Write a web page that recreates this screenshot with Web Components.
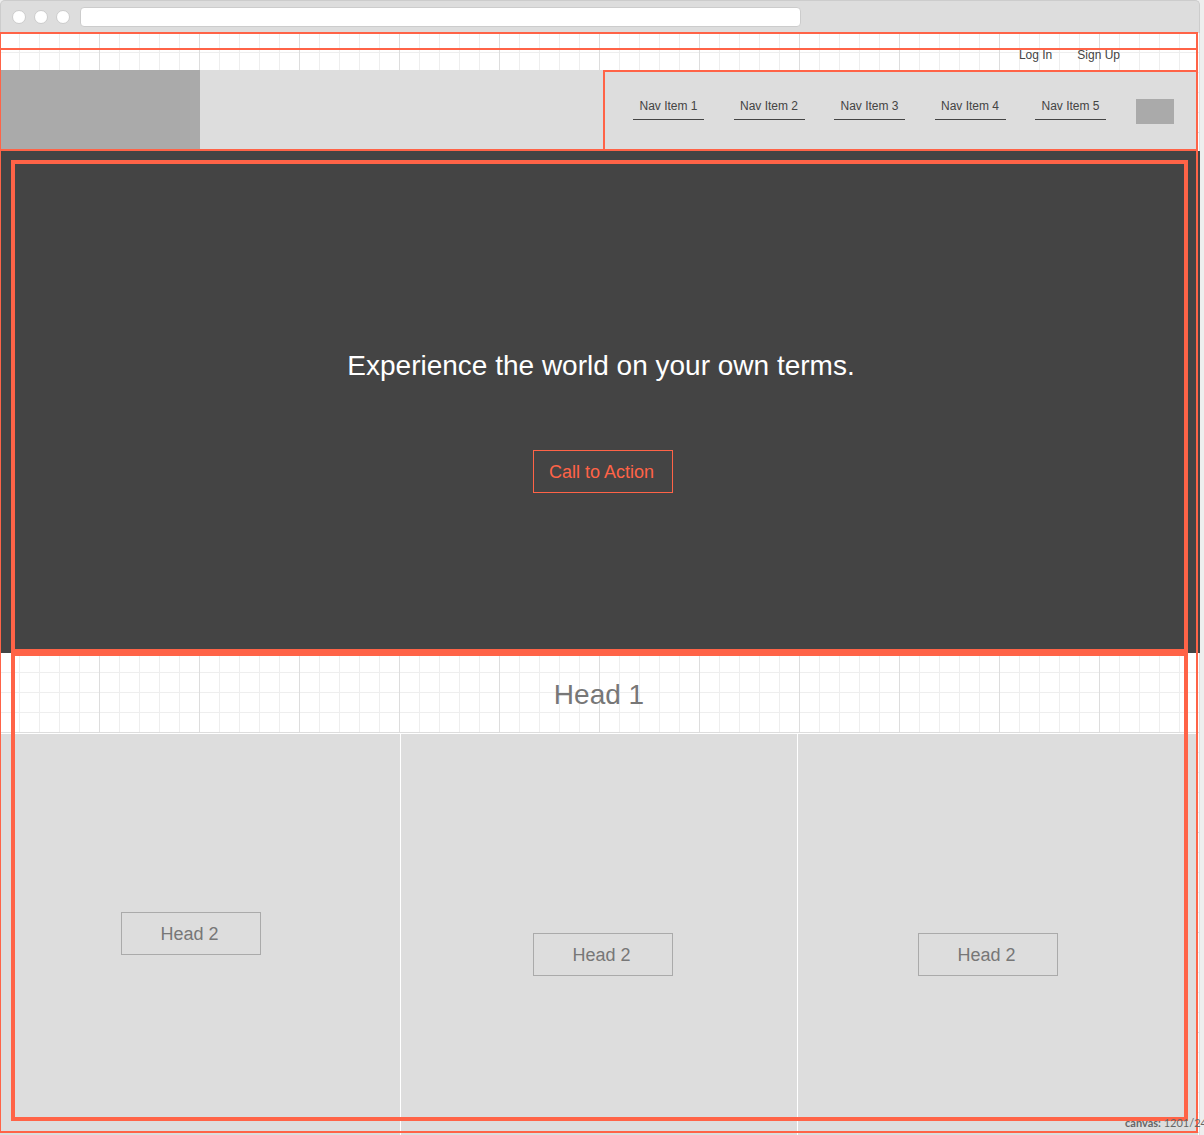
<!DOCTYPE html>
<html lang="en">
<head>
<meta charset="utf-8">
<title>Homepage wireframe</title>
<style>
  html { background: #eee; }
  body { margin: 0; overflow-x: hidden; font-family: "Liberation Sans", Arial, sans-serif; color: #444; }
</style>
</head>
<body>
<wire-page>
  <browser-chrome slot="chrome"></browser-chrome>
  <site-header>
    <a slot="account" href="#login">Log In</a>
    <a slot="account" href="#signup">Sign Up</a>
    <nav-item>Nav Item 1</nav-item>
    <nav-item>Nav Item 2</nav-item>
    <nav-item>Nav Item 3</nav-item>
    <nav-item>Nav Item 4</nav-item>
    <nav-item>Nav Item 5</nav-item>
  </site-header>
  <hero-banner>
    Experience the world on your own terms.
    <box-button slot="action" accent>Call to Action</box-button>
  </hero-banner>
  <feature-section>
    <span slot="title">Head 1</span>
    <feature-cell class="first"><box-button>Head 2</box-button></feature-cell>
    <feature-cell class="middle"><box-button>Head 2</box-button></feature-cell>
    <feature-cell class="last"><box-button>Head 2</box-button></feature-cell>
  </feature-section>
</wire-page>
<canvas-size label="canvas:">1201/24</canvas-size>

<script>
const define = (name, markup) => {
  customElements.define(name, class extends HTMLElement {
    constructor() {
      super();
      this.attachShadow({ mode: "open" }).innerHTML =
        "<style>*{box-sizing:border-box}:host{box-sizing:border-box}</style>" + markup;
    }
    connectedCallback() {
      const label = this.shadowRoot.querySelector("[data-label]");
      if (label) label.textContent = this.getAttribute("label");
    }
  });
};

define("wire-page", `
  <style>
    :host { --guide: #ff6347; display: flex; flex-direction: column; position: relative;
            min-height: 100vh; margin-right: 4px; }
    main { flex: 1; display: flex; flex-direction: column; background-color: #fff;
      background-image:
        linear-gradient(to left, #ddd 1px, transparent 1px),
        linear-gradient(to top, #ddd 1px, transparent 1px),
        linear-gradient(to left, #eee 1px, transparent 1px),
        linear-gradient(to top, #eee 1px, transparent 1px);
      background-size: 100px 100px, 100px 100px, 20px 20px, 20px 20px; }
    .guide { position: absolute; inset: 32px 2px 2px 0; border: 2px solid var(--guide);
             border-left-width: 1px; pointer-events: none; }
  </style>
  <slot name="chrome"></slot>
  <main><slot></slot></main>
  <div class="guide"></div>`);

define("browser-chrome", `
  <style>
    :host { display: flex; align-items: center; gap: 8px; height: 33px; padding: 0 11px;
            background: #ddd; border: 1px solid #ccc; border-bottom: 0; border-radius: 5px 5px 0 0; }
    i { flex: none; width: 14px; height: 14px; border-radius: 50%; background: #fff; border: 1px solid #ccc; }
    input { flex: 0 1 721px; min-width: 0; height: 20px; margin: 0 0 0 2px; padding: 0 6px;
            background: #fff; border: 1px solid #ccc; border-radius: 4px; outline: 0; }
  </style>
  <i></i><i></i><i></i>
  <input type="text" aria-label="Address">`);

define("site-header", `
  <style>
    :host { display: block; position: relative; margin-right: 2px; }
    .account { display: flex; justify-content: flex-end; gap: 25px; height: 37px; padding: 15px 78px 0 0; }
    ::slotted(a) { font-size: 12px; line-height: 14px; color: #444; text-decoration: none; }
    .bar { display: flex; justify-content: space-between; height: 81px; background: #ddd;
           border-bottom: 2px solid var(--guide); }
    .logo { width: 200px; background: #aaa; }
    nav { display: flex; align-items: flex-start; gap: 30px; padding: 27px 24px 0 28px;
          border: solid var(--guide); border-width: 2px 0 0 2px; }
    .items { display: flex; justify-content: space-between; width: 473px; }
    .search { width: 38px; height: 25px; padding: 0; border: 0; background: #aaa; }
    .guide { position: absolute; top: 15px; left: 0; right: 0; height: 2px; background: var(--guide); }
  </style>
  <div class="account"><slot name="account"></slot></div>
  <div class="bar">
    <div class="logo"></div>
    <nav><div class="items"><slot></slot></div><button class="search" aria-label="Search"></button></nav>
  </div>
  <div class="guide"></div>`);

define("nav-item", `
  <style>
    :host { display: block; width: 71px; }
    a { display: block; height: 21px; border-bottom: 1px solid #444; text-align: center;
        font-size: 12px; line-height: 14px; white-space: nowrap; color: #444; text-decoration: none; }
  </style>
  <a href="#"><slot></slot></a>`);

define("box-button", `
  <style>
    :host { display: block; --line: #aaa; --ink: #777; }
    :host([accent]) { --line: var(--guide); --ink: var(--guide); }
    button { display: block; width: 140px; height: 43px; padding: 0 3px 0 0; background: none;
             border: 1px solid var(--line); color: var(--ink); font: 18px/20px "Liberation Sans", Arial, sans-serif; }
  </style>
  <button type="button"><slot></slot></button>`);

define("hero-banner", `
  <style>
    :host { display: flex; flex-direction: column; align-items: center; gap: 68px; position: relative;
            padding: 199px 0 160px; background: #444; }
    h1 { margin: 0; padding-left: 2px; font-size: 28px; line-height: 32px; font-weight: 400; color: #fff; }
    .action { padding-left: 6px; }
    .guide { position: absolute; inset: 9px 12px 0 11px; border: 4px solid var(--guide); pointer-events: none; }
  </style>
  <h1><slot></slot></h1>
  <div class="action"><slot name="action"></slot></div>
  <div class="guide"></div>`);

define("feature-section", `
  <style>
    :host { flex: 1; display: flex; flex-direction: column; position: relative; }
    h2 { margin: 0 2px 0 0; padding: 26px 0 22px; text-align: center; font-size: 28px; line-height: 32px;
         font-weight: 400; color: #777; }
    .cells { flex: 1; display: grid; grid-template-columns: 400fr 396fr 400fr; gap: 1px; margin-right: 2px;
             background: #fff; border-top: 1px solid #fff; }
    .guide { position: absolute; inset: -1px 12px 14px 11px; border: 4px solid var(--guide); pointer-events: none; }
    ::slotted(.first) { padding: 178px 18px 0 0; }
    ::slotted(.middle) { padding: 199px 0 0 8px; }
    ::slotted(.last) { padding: 199px 20px 0 0; }
  </style>
  <h2><slot name="title"></slot></h2>
  <div class="cells"><slot></slot></div>
  <div class="guide"></div>`);

define("feature-cell", `
  <style>
    :host { display: flex; justify-content: center; align-items: flex-start; background: #ddd; }
  </style>
  <slot></slot>`);

define("canvas-size", `
  <style>
    :host { position: absolute; left: calc(100% - 79px); bottom: 5px; z-index: 2; white-space: nowrap;
            font: 11px/14px Lato, sans-serif; color: #666; }
  </style>
  <b data-label></b> <slot></slot>`);
</script>
</body>
</html>
